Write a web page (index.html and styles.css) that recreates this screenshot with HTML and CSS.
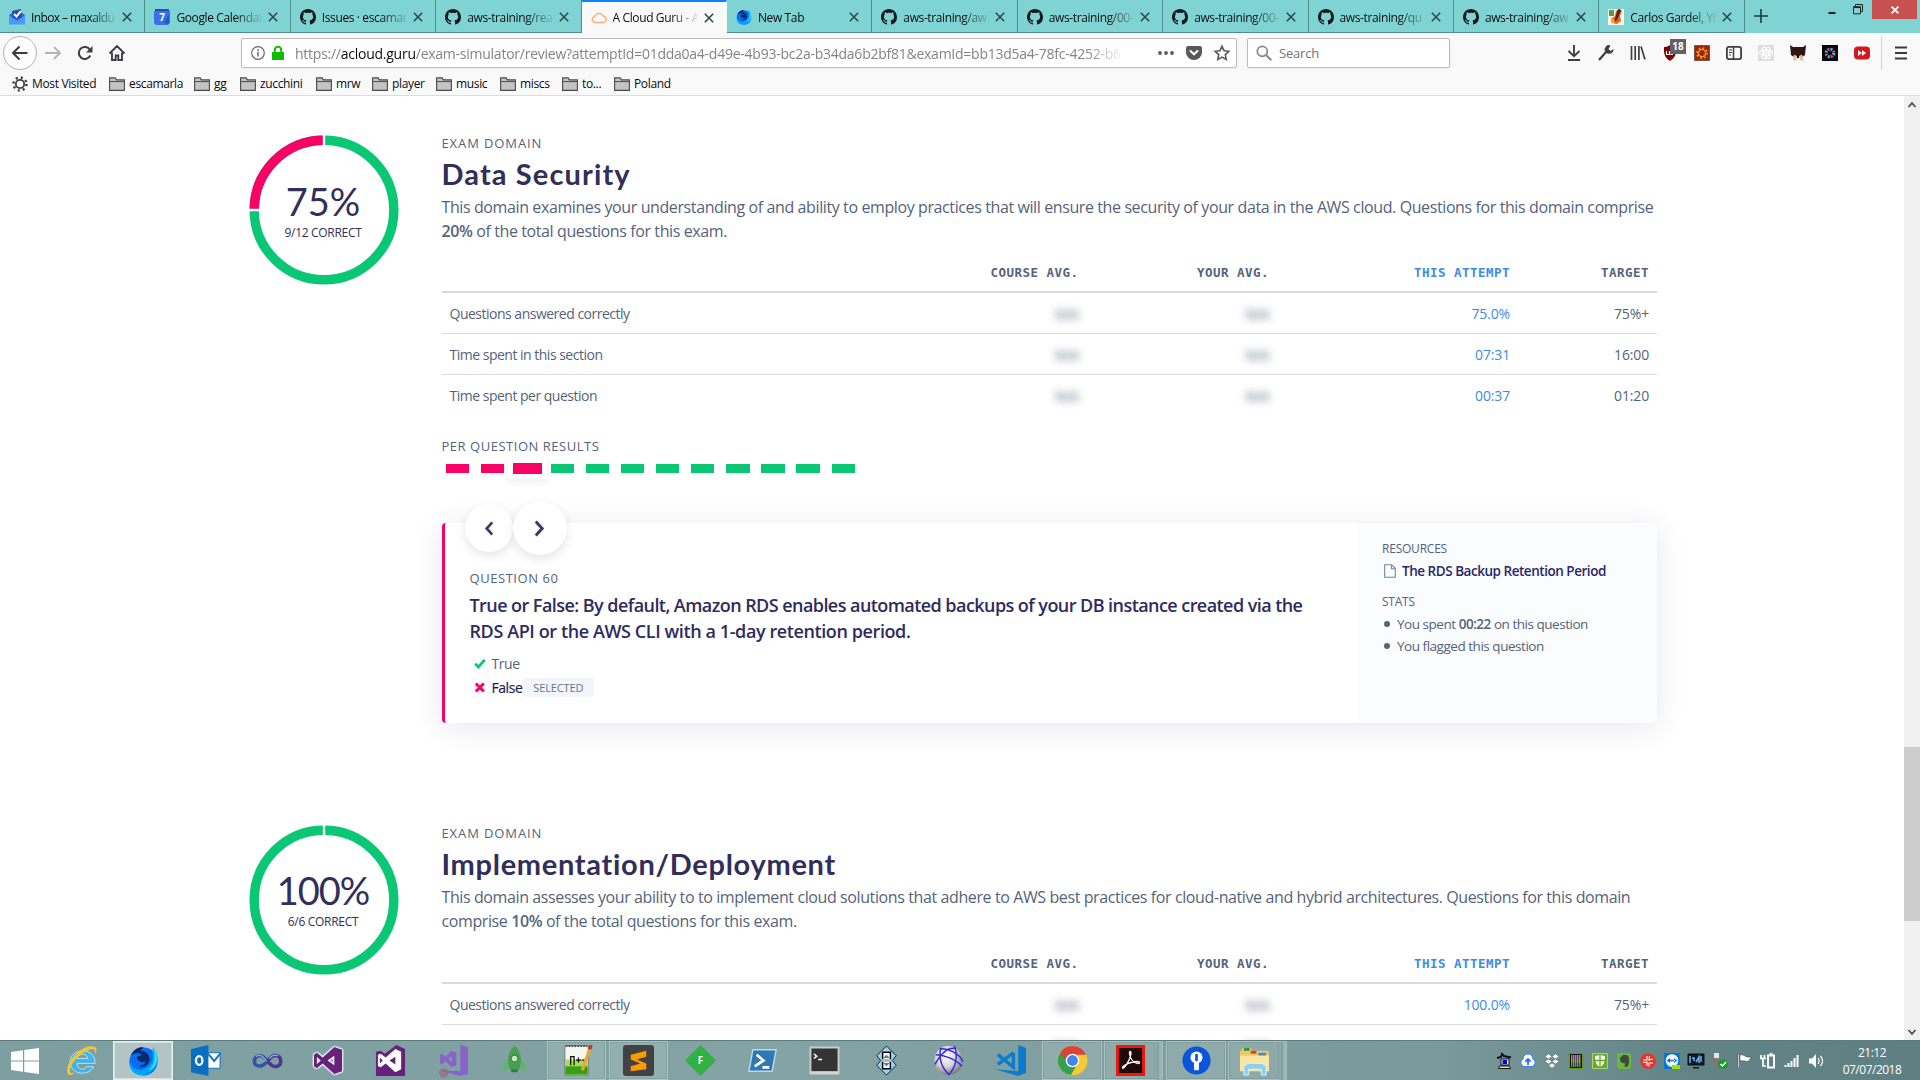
FILE: index.html
```html
<!DOCTYPE html>
<html lang="en">
<head>
<meta charset="utf-8">
<title>A Cloud Guru - Exam review</title>
<link rel="stylesheet" href="styles.css">
</head>
<body>
<svg class="defs" aria-hidden="true">
  <symbol id="github" viewBox="0 0 16 16"><path d="M8 0C3.58 0 0 3.58 0 8c0 3.54 2.29 6.53 5.47 7.59.4.07.55-.17.55-.38 0-.19-.01-.82-.01-1.49-2.01.37-2.53-.49-2.69-.94-.09-.23-.48-.94-.82-1.13-.28-.15-.68-.52-.01-.53.63-.01 1.08.58 1.23.82.72 1.21 1.87.87 2.33.66.07-.52.28-.87.51-1.07-1.78-.2-3.64-.89-3.64-3.95 0-.87.31-1.59.82-2.15-.08-.2-.36-1.02.08-2.12 0 0 .67-.21 2.2.82.64-.18 1.32-.27 2-.27s1.36.09 2 .27c1.53-1.04 2.2-.82 2.2-.82.44 1.1.16 1.92.08 2.12.51.56.82 1.27.82 2.15 0 3.07-1.87 3.75-3.65 3.95.29.25.54.73.54 1.48 0 1.07-.01 1.93-.01 2.2 0 .21.15.46.55.38A8.01 8.01 0 0 0 16 8c0-4.42-3.58-8-8-8z" fill="#14191c"/></symbol>
  <symbol id="close" viewBox="0 0 10 10"><path d="M.8.8l8.4 8.4M9.2.8L.8 9.2" stroke="#27474a" stroke-width="1.5" fill="none"/></symbol>
  <symbol id="folder" viewBox="0 0 16 14"><path d="M.6 13.4V.9h5.6l1.2 2h8v10.500z" fill="#c4c4c4" stroke="#4a4a4a" stroke-width="1.1"/><path d="M1 4.600h14.500" stroke="#4a4a4a"/></symbol>
  <symbol id="firefox" viewBox="0 0 32 32"><circle cx="16" cy="17" r="14.500" fill="#0a6cf5"/><path d="M3 11C5 5 10 2 16 2l-3 4c6 0 10 5 9 10s-6 8-11 6c5-1 7-3 7-5-3 2-8 0-9-4 1-2 3-2 5-2-1-3-6-4-11 0z" fill="#082a6b"/><path d="M26 2c5 6 6 13 3 19-3 7-10 11-17 10C5 30 1 24 1.500 17c2 6 8 10 14 8 8-2 12-10 9.500-18z" fill="#00a5ff"/><path d="M26 2c5 6 5 12 3 17-1 4-4 6-8 7 6-5 8-12 5-24z" fill="#2fe0fd"/></symbol>
  <symbol id="vs" viewBox="0 0 32 32"><path d="M22 2l8 3v22l-8 3L10 19l-6 5-3-2V10l3-2 6 5zM22 11l-7 5 7 5zM4 12.500v7L8 16z" fill-rule="evenodd"/></symbol>
</svg>

<div class="browser">
  <header class="tabs">
    <div class="tab"><svg class="fav" viewBox="0 0 16 16"><path d="M0 6l8-5 8 5v9H0z" fill="#2a66d9"/><path d="M3 2l9-2 1 9H4z" fill="#2449b8"/><path d="M0 6l8 6 8-6v9.500H0z" fill="#4a9bf7"/><path d="M5 5l2.500 2.500L12 2" stroke="#fff" stroke-width="2" fill="none"/></svg><span class="tab-title">Inbox – maxaldu</span><svg class="x"><use href="#close"/></svg></div>
    <div class="tab"><svg class="fav" viewBox="0 0 16 16"><path d="M1 0h14v3H1z" fill="#1f4fc0"/><path d="M0 2h16v12l-2 2H2l-2-2z" fill="#3772ea"/><path d="M10 14l5-9v9l-1 1z" fill="#2457c5"/><text x="8" y="12" text-anchor="middle" class="cal-day">7</text></svg><span class="tab-title">Google Calendar</span><svg class="x"><use href="#close"/></svg></div>
    <div class="tab"><svg class="fav"><use href="#github"/></svg><span class="tab-title">Issues · escamarl</span><svg class="x"><use href="#close"/></svg></div>
    <div class="tab"><svg class="fav"><use href="#github"/></svg><span class="tab-title">aws-training/rea</span><svg class="x"><use href="#close"/></svg></div>
    <div class="tab active"><svg class="fav" viewBox="0 0 16 16"><path d="M4 12.500a3.200 3.200 0 0 1-.3-6.200 4.600 4.600 0 0 1 8.500-.3A3.300 3.300 0 0 1 12.500 12.500z" fill="none" stroke="#ffae6b" stroke-width="1.300"/></svg><span class="tab-title">A Cloud Guru - A</span><svg class="x"><use href="#close"/></svg></div>
    <div class="tab"><svg class="fav"><use href="#firefox"/></svg><span class="tab-title">New Tab</span><svg class="x"><use href="#close"/></svg></div>
    <div class="tab"><svg class="fav"><use href="#github"/></svg><span class="tab-title">aws-training/aw</span><svg class="x"><use href="#close"/></svg></div>
    <div class="tab"><svg class="fav"><use href="#github"/></svg><span class="tab-title">aws-training/00-</span><svg class="x"><use href="#close"/></svg></div>
    <div class="tab"><svg class="fav"><use href="#github"/></svg><span class="tab-title">aws-training/00-</span><svg class="x"><use href="#close"/></svg></div>
    <div class="tab"><svg class="fav"><use href="#github"/></svg><span class="tab-title">aws-training/qu</span><svg class="x"><use href="#close"/></svg></div>
    <div class="tab"><svg class="fav"><use href="#github"/></svg><span class="tab-title">aws-training/aw</span><svg class="x"><use href="#close"/></svg></div>
    <div class="tab"><svg class="fav" viewBox="0 0 16 16"><path d="M0 0h16v16H0z" fill="#fdf6ea"/><path d="M1 1h5v6H1z" fill="#5d9a3a"/><path d="M8 2l4-2 2 2-2 5 1 5-4 3-5-1-1-4 4-3z" fill="#e0661a"/><path d="M10 0l3 1-4 10-3 2z" fill="#5a1d10"/><path d="M3 10l3 0 1 4-4 0z" fill="#f2a73b"/></svg><span class="tab-title">Carlos Gardel, Yi</span><svg class="x"><use href="#close"/></svg></div>
    <svg class="new-tab" viewBox="0 0 14 14"><path d="M7 0v14M0 7h14" stroke="#20393b" stroke-width="1.600"/></svg>
    <div class="window-controls">
      <svg viewBox="0 0 10 10"><path d="M1.500 7h7" stroke="#222" stroke-width="2"/></svg>
      <svg viewBox="0 0 10 10"><path d="M.5 2.800h7v7h-7zM2.500 2.500V.5h7v7h-2" fill="none" stroke="#222"/><path d="M.5 3.300h7" stroke="#222" stroke-width="1.500"/></svg>
      <span class="win-close"><svg viewBox="0 0 8 8"><path d="M.6.6l6.800 6.800M7.400.6L.6 7.400" stroke="#fff" stroke-width="1.700"/></svg></span>
    </div>
  </header>

  <div class="navbar">
    <span class="back"><svg viewBox="0 0 16 16"><path d="M15.500 8H1M7.500 1.500L1 8l6.500 6.500" fill="none" stroke="#3b3b3c" stroke-width="2"/></svg></span>
    <svg class="ic" viewBox="0 0 16 16"><path d="M0 8h14.500M9 2l6 6-6 6" fill="none" stroke="#b3b3b5" stroke-width="1.800"/></svg>
    <svg class="ic" viewBox="0 0 16 16"><path d="M13.300 10.500a6 6 0 1 1-.3-5.500" fill="none" stroke="#3f3f41" stroke-width="2"/><path d="M15.500 1v6.500H9z" fill="#3f3f41"/></svg>
    <svg class="ic" viewBox="0 0 16 16"><path d="M.5 8.500L8 1l7.500 7.500M3 7.500V15h3.700v-4.500h2.600V15H13V7.500" fill="none" stroke="#3f3f41" stroke-width="1.900"/></svg>
    <div class="urlbar">
      <svg class="info" viewBox="0 0 14 14"><circle cx="7" cy="7" r="6.300" fill="none" stroke="#6a6a6c" stroke-width="1.200"/><path d="M7 6v4.500M7 3.300v1.600" stroke="#6a6a6c" stroke-width="1.500"/></svg>
      <svg class="lock" viewBox="0 0 12 14"><path d="M0 6h12v8H0z" fill="#12bc00"/><path d="M2.800 7V4a3.200 3.200 0 0 1 6.400 0v3" fill="none" stroke="#12bc00" stroke-width="2"/></svg>
      <span class="url">https://<b>acloud.guru</b>/exam-simulator/review?attemptId=01dda0a4-d49e-4b93-bc2a-b34da6b2bf81&amp;examId=bb13d5a4-78fc-4252-b6</span>
      <svg class="ic" viewBox="0 0 16 16"><g fill="#59595b"><circle cx="2" cy="8" r="1.900"/><circle cx="8" cy="8" r="1.900"/><circle cx="14" cy="8" r="1.900"/></g></svg>
      <svg class="ic" viewBox="0 0 16 16"><path d="M2 1h12a2 2 0 0 1 2 2v4.500a8 7.500 0 0 1-16 0V3a2 2 0 0 1 2-2z" fill="#59595b"/><path d="M4.500 6L8 9.300 11.500 6" fill="none" stroke="#fff" stroke-width="2" stroke-linecap="round"/></svg>
      <svg class="ic" viewBox="0 0 16 16"><path d="M8 1.300l2 4.400 4.900.6-3.600 3.300.9 4.900L8 12.100l-4.200 2.400.9-4.900L1.100 6.300 6 5.700z" fill="none" stroke="#59595b" stroke-width="1.600"/></svg>
    </div>
    <div class="searchbar"><svg class="ic" viewBox="0 0 16 16"><circle cx="6.300" cy="6.300" r="5" fill="none" stroke="#8a8a8c" stroke-width="1.800"/><path d="M10 10l5.300 5.300" stroke="#8a8a8c" stroke-width="2"/></svg><span>Search</span></div>
    <div class="tools">
      <svg viewBox="0 0 16 16"><path d="M8 0v10.500M2.500 6L8 11.200 13.500 6M2 15h12" fill="none" stroke="#3f3f41" stroke-width="1.900"/></svg>
      <svg viewBox="0 0 16 16"><path d="M1 15l7.500-8.500" stroke="#3f3f41" stroke-width="2.200"/><path d="M12.500.5A4.200 4.200 0 0 0 7 6c.5 1.500 2 2.800 4 2.800A4.200 4.200 0 0 0 15.500 4l-3 2-2-2z" fill="#3f3f41"/></svg>
      <svg viewBox="0 0 16 16"><path d="M1.500 1v14M5.200 1v14M8.900 1v14M11 1.500l4 13" stroke="#3f3f41" stroke-width="1.700"/></svg>
      <span class="ublock"><svg viewBox="0 0 16 16"><path d="M8 0c2 1.500 4 2 6 2 .5 7-1 11-6 14C3 13 1.500 9 2 2c2 0 4-.5 6-2z" fill="#800000"/><path d="M4.500 6v3.500h3V6M9 6.500v3h2" fill="none" stroke="#fff" stroke-width="1.200"/></svg><em>18</em></span>
      <svg viewBox="0 0 16 16"><path d="M.5.5h15v15H.5z" fill="#a02506" stroke="#75554a"/><circle cx="8" cy="8" r="5" fill="none" stroke="#f0a030" stroke-width="1.800" stroke-dasharray="1.600 2.320"/><circle cx="8" cy="8" r="3.600" fill="none" stroke="#f0a030" stroke-width="1.300"/></svg>
      <svg viewBox="0 0 16 16"><rect x=".9" y="1.900" width="14.200" height="12.200" rx="2" fill="none" stroke="#3f3f41" stroke-width="1.800"/><path d="M7.500 2v12" stroke="#3f3f41" stroke-width="1.500"/><path d="M3 5h3M3 7.500h3M3 10h2" stroke="#3f3f41"/></svg>
      <svg viewBox="0 0 16 16"><path d="M0 0h16v16H0z" fill="#dedede"/><g fill="none" stroke="#fff" stroke-width="1.100"><ellipse cx="8" cy="8" rx="6.500" ry="2.600"/><ellipse cx="8" cy="8" rx="6.500" ry="2.600" transform="rotate(60 8 8)"/><ellipse cx="8" cy="8" rx="6.500" ry="2.600" transform="rotate(120 8 8)"/></g><circle cx="8" cy="8" r="1.500" fill="#fff"/></svg>
      <svg viewBox="0 0 16 16"><path d="M0 0l3 2h10l3-2-1 10-3 2H4l-3-2z" fill="#2e1613"/><path d="M3 15.500l1-6 3 1.500h2l3-1.500 1.500 6h-3l-1-3H7l-1 3z" fill="#eebd98"/><path d="M7 11h2v2H7z" fill="#111"/></svg>
      <svg viewBox="0 0 16 16"><path d="M0 0h16v16H0z" fill="#08080c"/><g fill="none" stroke-width="3"><circle cx="8" cy="8" r="3.800" stroke="#24c8e0" stroke-dasharray="2 3.970"/><circle cx="8" cy="8" r="3.800" stroke="#e8408c" stroke-dasharray="2 3.970" stroke-dashoffset="-3"/></g></svg>
      <svg viewBox="0 0 16 16"><rect y="1.500" width="16" height="13" rx="4" fill="#d8141c"/><path d="M4 5l4 3-4 3zM8 5l4 3-4 3z" fill="#fff"/></svg>
    </div>
    <svg class="menu" viewBox="0 0 12 14"><path d="M0 1.500h12M0 7h12M0 12.500h12" stroke="#3a3a3c" stroke-width="2"/></svg>
  </div>

  <nav class="bookmarks">
    <span><svg class="gear" viewBox="0 0 16 16"><circle cx="8" cy="8" r="4.200" fill="none" stroke="#3f3f41" stroke-width="1.800"/><circle cx="8" cy="8" r="6.500" fill="none" stroke="#3f3f41" stroke-width="2.400" stroke-dasharray="2.100 3"/></svg>Most Visited</span>
    <span><svg><use href="#folder"/></svg>escamarla</span>
    <span><svg><use href="#folder"/></svg>gg</span>
    <span><svg><use href="#folder"/></svg>zucchini</span>
    <span><svg><use href="#folder"/></svg>mrw</span>
    <span><svg><use href="#folder"/></svg>player</span>
    <span><svg><use href="#folder"/></svg>music</span>
    <span><svg><use href="#folder"/></svg>miscs</span>
    <span><svg><use href="#folder"/></svg>to...</span>
    <span><svg><use href="#folder"/></svg>Poland</span>
  </nav>
</div>

<div class="viewport">
  <main class="page">
    <section class="domain">
      <div class="score">
        <svg viewBox="0 0 150 150"><circle cx="75" cy="75" r="69.800" fill="none" stroke="#0ac775" stroke-width="9.400"/><path d="M5.200 75A69.800 69.800 0 0 1 75 5.200" fill="none" stroke="#f80266" stroke-width="9.400"/><path d="M75 0v10.500M0 75h10.500" stroke="#fff" stroke-width="2.400"/></svg>
        <div class="score-text"><strong>75%</strong><span>9/12 CORRECT</span></div>
      </div>
      <div class="detail">
        <div class="eyebrow">EXAM DOMAIN</div>
        <h2 class="short">Data Security</h2>
        <p class="desc">This domain examines your understanding of and ability to employ practices that will ensure the security of your data in the AWS cloud. Questions for this domain comprise<br><b>20%</b> of the total questions for this exam.</p>
        <div class="table">
          <div class="row head"><span></span><span>COURSE AVG.</span><span>YOUR AVG.</span><span class="mine">THIS ATTEMPT</span><span>TARGET</span></div>
          <div class="row"><span>Questions answered correctly</span><span class="hid">N/A</span><span class="hid">N/A</span><span class="mine">75.0%</span><span>75%+</span></div>
          <div class="row"><span>Time spent in this section</span><span class="hid">N/A</span><span class="hid">N/A</span><span class="mine">07:31</span><span>16:00</span></div>
          <div class="row"><span>Time spent per question</span><span class="hid">N/A</span><span class="hid">N/A</span><span class="mine">00:37</span><span>01:20</span></div>
        </div>
        <div class="eyebrow results-label">PER QUESTION RESULTS</div>
        <div class="results"><i class="bad"></i><i class="bad"></i><i class="bad current"></i><i></i><i></i><i></i><i></i><i></i><i></i><i></i><i></i><i></i></div>
        <article class="card">
          <div class="pager">
            <span class="round"><svg viewBox="0 0 10 16"><path d="M8.500 1.500L2.500 8l6 6.500" fill="none" stroke="#3b3a66" stroke-width="2.800"/></svg></span>
            <span class="round big"><svg viewBox="0 0 10 16"><path d="M1.500 1.500L7.500 8l-6 6.500" fill="none" stroke="#3b3a66" stroke-width="2.800"/></svg></span>
          </div>
          <div class="question">
            <div class="eyebrow light">QUESTION 60</div>
            <h3>True or False: By default, Amazon RDS enables automated backups of your DB instance created via the<br><span class="loose">RDS API or the AWS CLI with a 1-day retention period.</span></h3>
            <div class="answer"><svg viewBox="0 0 12 10"><path d="M1.200 5.200l3.200 3.200 6.300-7" fill="none" stroke="#0ac775" stroke-width="2.800"/></svg>True</div>
            <div class="answer chosen"><svg viewBox="0 0 12 10"><path d="M1.800 1l8 8M9.800 1l-8 8" fill="none" stroke="#f80266" stroke-width="3"/></svg>False<em>SELECTED</em></div>
          </div>
          <aside>
            <div class="side-label">RESOURCES</div>
            <div class="resource"><svg viewBox="0 0 12 14"><path d="M.7.700h7l3.600 3.600v9H.7zM7.500.700v4h4" fill="none" stroke="#6f86a3" stroke-width="1.100"/></svg>The RDS Backup Retention Period</div>
            <div class="side-label stats">STATS</div>
            <ul><li>You spent <b>00:22</b> on this question</li><li>You flagged this question</li></ul>
          </aside>
        </article>
      </div>
    </section>

    <section class="domain second">
      <div class="score">
        <svg viewBox="0 0 150 150"><circle cx="75" cy="75" r="69.800" fill="none" stroke="#0ac775" stroke-width="9.400"/><path d="M75 0v10.500" stroke="#fff" stroke-width="2.400"/></svg>
        <div class="score-text"><strong class="full">100%</strong><span>6/6 CORRECT</span></div>
      </div>
      <div class="detail">
        <div class="eyebrow">EXAM DOMAIN</div>
        <h2>Implementation/Deployment</h2>
        <p class="desc">This domain assesses your ability to to implement cloud solutions that adhere to AWS best practices for cloud-native and hybrid architectures. Questions for this domain<br>comprise <b>10%</b> of the total questions for this exam.</p>
        <div class="table">
          <div class="row head"><span></span><span>COURSE AVG.</span><span>YOUR AVG.</span><span class="mine">THIS ATTEMPT</span><span>TARGET</span></div>
          <div class="row"><span>Questions answered correctly</span><span class="hid">N/A</span><span class="hid">N/A</span><span class="mine">100.0%</span><span>75%+</span></div>
          <div class="row"><span></span><span class="hid">N/A</span><span class="hid">N/A</span><span></span><span></span></div>
        </div>
      </div>
    </section>
  </main>
  <div class="scrollbar">
    <svg viewBox="0 0 8 6"><path d="M.5 5L4 1.200 7.500 5" fill="none" stroke="#505050" stroke-width="1.800"/></svg>
    <div class="thumb"></div>
    <svg viewBox="0 0 8 6"><path d="M.5 1L4 4.800 7.500 1" fill="none" stroke="#505050" stroke-width="1.800"/></svg>
  </div>
</div>

<footer class="taskbar">
  <div class="start"><svg viewBox="0 0 28 26"><path d="M0 4l12-1.800V12.400H0zM13.200 2L28 0v12.400H13.200zM0 13.600h12v10.200L0 22zM13.200 13.600H28V26l-14.800-2z" fill="#fff"/></svg></div>
  <div class="app"><svg viewBox="0 0 32 32"><path d="M30 19H11.500c0 6 7 8 9.500 3.500h7.500C24 32 6 32 4 18 4 2 31 2 30 19zM11.500 14h11c-.5-6-10-6-11 0z" fill="#41b4ee" fill-rule="evenodd" stroke="#d7f2ff" stroke-width=".8"/><path d="M2 30C-3 20 17-3 30 2c3 2 1 6 0 8 1-5-1-7-6-5C14 8 2 22 4.500 28c1 2 3 1 5 0-3 3-6 4-7.500 2z" fill="#f7c52c"/></svg></div>
  <div class="app focused"><svg><use href="#firefox"/></svg></div>
  <div class="app"><svg viewBox="0 0 32 32"><path d="M17 8h14v16H17z" fill="#fff" stroke="#0a6fc2"/><path d="M18.500 9L25 16.500 31.500 8.500" stroke="#0f77cc" stroke-width="2" fill="none"/><path d="M1 4l18-4v32L1 28z" fill="#0a6fc2"/><ellipse cx="9.500" cy="16" rx="3.300" ry="4.500" fill="none" stroke="#fff" stroke-width="2.400"/></svg></div>
  <div class="app"><svg viewBox="0 0 32 32"><path d="M16 17C12 11 9 10.500 6 11.500c-5 2-4.500 9 0 10 4 1 6-1 10-4.500z" fill="none" stroke="#2e58a5" stroke-width="3.600"/><path d="M16 17c4-6 7-7 10-6 5 2 5 9.500 0 11-4 1-6-1-10-5z" fill="none" stroke="#4c3a8c" stroke-width="3.600"/><path d="M4 12c4-3 7-1 11 5M18 14c3-4 6-4 9-3" fill="none" stroke="#8bb3e8" stroke-width="1.200"/></svg></div>
  <div class="app vs-out"><svg fill="#68217a"><use href="#vs"/></svg></div>
  <div class="app"><svg viewBox="0 0 32 32"><path d="M1 7l5-1 4 3 12-9 9 4v28H1z" fill="#68217a"/><path d="M21 4l6 3v18l-6 3L11 19l-5 4-3-1V10l3-1 5 4zM21 12l-6 4 6 4zM5 13v6l3-3z" fill="#fff" fill-rule="evenodd"/></svg></div>
  <div class="app"><svg viewBox="0 0 32 32"><path d="M24 0l8 2v28l-8 2-22-6 22 1z" fill="#8a63c9"/><path d="M15 6l5 2v13l-5 2-6-6-4 3-2-1v-9l2-1 4 3zM15 11l-3 3.500 3 3.500z" fill="#8a63c9" fill-rule="evenodd"/><circle cx="7" cy="29" r="5" fill="#a8506f" opacity=".45"/></svg></div>
  <div class="app"><svg viewBox="0 0 32 32"><path d="M16 1c7 6 8 15 5 24H11C8 16 9 7 16 1z" fill="#47a04f"/><path d="M9 16c-5 3-5 8-4 11l5-3zM23 16c5 3 5 8 4 11l-5-3z" fill="#5db565"/><circle cx="16" cy="14" r="3.500" fill="#c7e6c8" stroke="#277a35"/><path d="M12 25h8l-1 3h-6z" fill="#2f8040"/></svg></div>
  <div class="app open"><svg viewBox="0 0 32 32"><path d="M4 1h24v30H4z" fill="#f4f6f0" stroke="#555" stroke-width=".7"/><path d="M4.500 15h23v15.500h-23z" fill="#a6dc5a"/><path d="M4.500 22h23v8.500h-23z" fill="#35a014"/><path d="M5 1h22" stroke="#444" stroke-width="2" stroke-dasharray="1.500 1.500"/><path d="M10 21v-9h3.500v9M15.500 15.500h5M18 13v5M21.500 15.500h5" stroke="#111" stroke-width="1.300" fill="none"/><path d="M30 3L22 26" stroke="#f3a22f" stroke-width="3.200"/><path d="M31 0l-1.500 4.500" stroke="#b83b3b" stroke-width="3.600"/></svg></div>
  <div class="app open"><svg viewBox="0 0 32 32"><rect width="32" height="32" rx="3" fill="#424244"/><path d="M24 6v6l-10 3 10 4v6L8 27v-5l10-3-10-4v-5z" fill="#ff9a00"/></svg></div>
  <div class="app"><svg viewBox="0 0 32 32"><path d="M16 0l16 16-16 16L0 16z" fill="#30b143"/><text x="16" y="20" text-anchor="middle" class="glyph-f">F</text></svg></div>
  <div class="app"><svg viewBox="0 0 32 32"><path d="M6 5h24l-4 22H2z" fill="#2f78b7" stroke="#b6daf2" stroke-width="1.500"/><path d="M10 10l7 6-9 6M16 23h7" stroke="#fff" stroke-width="2.800" fill="none"/></svg></div>
  <div class="app"><svg viewBox="0 0 32 32"><path d="M1.500 2.500h29v27h-29z" fill="#343434" stroke="#c9cccb" stroke-width="2"/><path d="M2 27h28v3H2z" fill="#d5d6d4"/><path d="M5 9l3 2.500L5 14M9.500 15h4" stroke="#fff" stroke-width="1.500" fill="none"/></svg></div>
  <div class="app"><svg viewBox="0 0 32 32"><path d="M16 1l10 10-4 5 4 5-10 10L6 21l4-5-4-5z" fill="#9dd2f7" stroke="#123"/><path d="M12 7.500h8v17h-8z" fill="#fff" stroke="#000" stroke-width="1.500"/><path d="M12.500 13.500L16 10l3.500 3.500zM12.500 18.500L16 22l3.500-3.500z" fill="#2f8fae"/><path d="M11 14.500h10v3H11z" fill="#b5b5b5"/></svg></div>
  <div class="app"><svg viewBox="0 0 32 32"><defs><radialGradient id="ball" cx=".4" cy=".35" r=".7"><stop offset="0" stop-color="#fff"/><stop offset=".5" stop-color="#d8d8dc"/><stop offset="1" stop-color="#6f6f74"/></radialGradient></defs><ellipse cx="16" cy="16" rx="14.500" ry="15" fill="url(#ball)"/><g fill="none" stroke="#3528d8" stroke-width="1.500"><path d="M3 10c7 0 20 4 27 12M2 20C10 6 18 2 24 4M8 3c-2 10 0 20 9 28M22 1c4 9 2 22-6 30M7 4c9-1 20 5 24 13"/></g></svg></div>
  <div class="app"><svg viewBox="0 0 32 32"><path d="M24 0l8 3v26l-8 3L0 25l24 2z" fill="#0b7bd0"/><path d="M19 8v15L3 10M3 20L19 8" fill="none" stroke="#0b7bd0" stroke-width="3.500"/></svg></div>
  <div class="app open"><svg viewBox="0 0 32 32"><circle cx="16" cy="16" r="15" fill="#e9ba27"/><path d="M2.700 9A15 15 0 0 0 14.500 31L21 20l-5-4z" fill="#34a050"/><path d="M30 10a15 15 0 0 1-15.500 21L22 18V10z" fill="#f4cb37"/><path d="M3 8.500A15 15 0 0 1 29.800 10H16l-6 6z" fill="#d9453a"/><circle cx="16" cy="16" r="7" fill="#fff"/><circle cx="16" cy="16" r="5.600" fill="#4285f0"/></svg></div>
  <div class="app open stacked"><svg viewBox="0 0 32 32"><path d="M2.500 1.500h27v29h-27z" fill="#1f0909" stroke="#f01708" stroke-width="3"/><path d="M8 24c3-1 8-10 8.500-15 .2-3-2-3-1.500 0 .6 5 4 9 8 10 3 .5 3-2 0-2-5 0-9 1.500-13 4-2 1.500-2.500 2.500-2 3z" fill="none" stroke="#fff" stroke-width="1.400"/></svg></div>
  <div class="app open"><svg viewBox="0 0 32 32"><circle cx="16" cy="16" r="14.500" fill="#0a55dd"/><circle cx="16" cy="13" r="6.200" fill="#fff"/><path d="M13.500 16h5v10h-5z" fill="#fff"/><path d="M16 10.500v5" stroke="#0a55dd" stroke-width="2.800" stroke-linecap="round"/></svg></div>
  <div class="app open stacked"><svg viewBox="0 0 32 32"><path d="M1 7l3-4h8l2 3h16l1 3v18H1z" fill="#eec964"/><path d="M5 3h6v3H5z" fill="#2b9d3f"/><path d="M12 6h6v3h-6z" fill="#d24132"/><path d="M20 8h8v3h-8z" fill="#368ede"/><path d="M1 11h30v16H1z" fill="#fae6a0"/><path d="M5 31V22l4-3h15l4 3v9h-5v-6H10v6z" fill="#8fd0ee" stroke="#d8f3ff"/></svg></div>
  <div class="tray">
    <svg viewBox="0 0 16 16"><path d="M5 6h8v6H5z" fill="#eee" stroke="#111"/><path d="M3.500 13h10l1 2.500h-12z" fill="#ddd" stroke="#111"/><path d="M6.500 7h4.500v4H6.500z" fill="#00f"/><path d="M1 5l4-1 1-3 2 2 7 1.500" stroke="#111" stroke-width="2" fill="none"/></svg>
    <svg viewBox="0 0 16 16"><path d="M4 13.500a4 4 0 0 1-1-7.500 5 5 0 0 1 10 0 4 4 0 0 1-1 7.500z" fill="#fff" stroke="#3c7bea"/><path d="M8 12V6M5.500 8.500L8 6l2.500 2.500" stroke="#2c6fe0" stroke-width="1.800" fill="none"/></svg>
    <svg viewBox="0 0 16 16"><path d="M4.500 1L8 3.500 4.500 6 1 3.500zM11.500 1L15 3.500 11.500 6 8 3.500zM4.500 6L8 8.500 4.500 11 1 8.500zM11.500 6L15 8.500 11.500 11 8 8.500zM8 10l3.500 2.500L8 15l-3.500-2.500z" fill="#fff" stroke="#456" stroke-width=".4"/></svg>
    <svg viewBox="0 0 16 16"><path d="M.5 0h15v16H.5z" fill="#6b9a18"/><path d="M2 1h12v14H2z" fill="#161616"/><path d="M3 3h10M3 5h10" stroke="#e0a0c0" stroke-width="1.300" stroke-dasharray="1.500 .5"/><path d="M3 7h10M3 9h10" stroke="#e0c070" stroke-width="1.300" stroke-dasharray="1.500 .5"/><path d="M3 11h10M3 13h10" stroke="#5fbea3" stroke-width="1.300" stroke-dasharray="1.500 .5"/></svg>
    <svg viewBox="0 0 16 16"><path d="M.5.500h15v15H.5z" fill="#6aa92b" stroke="#a8d66c"/><path d="M3 3l5-1 5 1c0 6-1 9-5 11-4-2-5-5-5-11z" fill="#f0f7e6"/><path d="M8 2v12M3 7.500h10" stroke="#6aa92b" stroke-width="1.300"/></svg>
    <svg viewBox="0 0 16 16"><rect x="1" width="14" height="16" rx="2" fill="#68b53f"/><path d="M4 5l3-3h3c3 0 3 3 3 6s-1 6-3 6-2-3 0-3l-3-1c-2 0-3-2-3-5z" fill="#3c4a3a"/></svg>
    <svg viewBox="0 0 16 16"><circle cx="8" cy="8" r="7.800" fill="#e6332a"/><path d="M7 3v4H3M9.500 3L9 7l4-1M3 9.500l4-.5v4M13 10H9v3.500" stroke="#fff" stroke-width="1.100" fill="none"/></svg>
    <svg viewBox="0 0 16 16"><path d="M0 0h16v16H0z" fill="#0b75de"/><circle cx="8" cy="7.500" r="6.300" fill="#fff"/><path d="M2.500 7.500L6 5v5zM13.500 7.500L10 5v5zM5 6.800h6v1.400H5z" fill="#0b75de"/><path d="M8 12h8v4H8z" fill="#9be300"/></svg>
    <svg viewBox="0 0 16 16"><path d="M0 1h16v11H0z" fill="#101a28" stroke="#0b0f18"/><path d="M2 3v7M4 5h2v3M8 9l3-5v6M13 3v6" stroke="#69b8ee" stroke-width="1.500" fill="none"/><path d="M5 14h6v1.500H5z" fill="#111"/></svg>
    <svg viewBox="0 0 16 16"><path d="M2 0h5v5H2z" fill="#e6e6e6"/><path d="M0 5h8v7l-3 4H3l-3-4z" fill="#777b7b"/><circle cx="11" cy="11" r="5" fill="#1e9b2b"/><path d="M8.500 11l2 2 3.500-4" stroke="#fff" stroke-width="1.500" fill="none"/></svg>
    <svg viewBox="0 0 16 16"><path d="M2 1h1.500v14H2z" fill="#fff" stroke="#334" stroke-width=".5"/><path d="M4 2c3-1 4 1 7 2h4l-2 4c-4 1-5-1-9 0z" fill="#fff" stroke="#334" stroke-width=".5"/></svg>
    <svg viewBox="0 0 16 16"><path d="M8 2.500h6v12H8z" fill="none" stroke="#fff" stroke-width="2"/><path d="M9.500 0h3v2h-3z" fill="#fff"/><path d="M1 2v3M4.500 2v3M0 5.500h6M3 6v7h3" stroke="#fff" stroke-width="1.700" fill="none"/></svg>
    <svg viewBox="0 0 16 16"><path d="M1.500 14v-2M4.500 14v-4M7.500 14V8M10.500 14V5M13.500 14V2" stroke="#fff" stroke-width="2"/></svg>
    <svg viewBox="0 0 16 16"><path d="M1 5.500h3L8 1v14l-4-4.500H1z" fill="#fff"/><path d="M10 5c1.500 2 1.500 4 0 6M12.500 3c2.500 3 2.500 7 0 10" stroke="#fff" stroke-width="1.200" fill="none"/></svg>
  </div>
  <div class="clock"><span>21:12</span><span>07/07/2018</span></div>
</footer>
</body>
</html>
```
FILE: styles.css
```css
* { box-sizing: border-box; margin: 0; padding: 0; }
html, body { width: 1920px; height: 1080px; overflow: hidden; }
body { display: flex; flex-direction: column; background: #fff; font: 12px "Open Sans", "Noto Sans", sans-serif; color: #55637a; }
svg { display: block; flex: none; overflow: visible; }
.defs { position: absolute; width: 0; height: 0; overflow: hidden; }

/* browser chrome */
.browser { height: 96px; flex: none; background: #f9f9fa; border-bottom: 1px solid #dcdcdd; color: #0c0c0d; }
.tabs { display: flex; height: 33px; background: #7fd3d2; }
.tab { display: flex; align-items: center; flex: none; width: 145.4px; height: 33px; padding: 2px 12px 0 9px; border-right: 1px solid #4f8e8f; border-bottom: 1px solid #4f8e8f; }
.tab.active { background: #f9f9fa; border-top: 2px solid #0a84ff; border-bottom: 0; padding-top: 0; border-right-color: #f9f9fa; }
.fav { width: 16px; height: 16px; }
.tab-title { width: 87px; margin: 0 7px 0 6px; overflow: hidden; white-space: nowrap; letter-spacing: -.38px; -webkit-mask-image: linear-gradient(90deg, #000 58px, transparent 88px); mask-image: linear-gradient(90deg, #000 58px, transparent 88px); }
.tab:first-child .tab-title { letter-spacing: -.6px; }
.x { width: 10px; height: 10px; }
.cal-day { font: bold 10px "Open Sans", sans-serif; fill: #fff; }
.glyph-f { font: bold 10px "Open Sans", sans-serif; fill: #fff; }
.new-tab { width: 14px; height: 14px; margin: 9px 0 0 9px; }
.window-controls { display: flex; margin-left: auto; padding-right: 3px; }
.window-controls > svg { width: 10px; height: 10px; margin: 6px 16px 0 0; }
.window-controls > svg + svg { margin: 4px 9px 0 0; }
.win-close { display: flex; align-items: center; justify-content: center; width: 45px; height: 19px; background: #c75050; }
.win-close svg { width: 8px; height: 8px; }

.navbar { display: flex; align-items: center; height: 40px; padding: 0 13px 0 3px; }
.back { display: flex; align-items: center; justify-content: center; width: 34px; height: 34px; border: 1px solid #b5b5b6; border-radius: 50%; background: #fdfdfd; }
.back svg, .ic { width: 16px; height: 16px; }
.back + .ic { margin-left: 8px; }
.ic + .ic { margin-left: 16px; }
.urlbar, .searchbar { display: flex; align-items: center; height: 30px; border: 1px solid #bcbcbd; border-radius: 2px; background: #fff; box-shadow: 0 1px 3px rgba(0,0,0,.05); }
.urlbar { width: 996px; margin-left: 116px; padding-left: 9px; }
.info { width: 14px; height: 14px; }
.lock { width: 12px; height: 14px; margin-left: 7px; }
.url { width: 830px; margin: 0 33px 0 11px; overflow: hidden; white-space: nowrap; font-size: 14px; letter-spacing: -.25px; color: #838385; -webkit-mask-image: linear-gradient(90deg, #000 790px, transparent 830px); mask-image: linear-gradient(90deg, #000 790px, transparent 830px); }
.url b { font-weight: 400; color: #0c0c0d; }
.urlbar .ic + .ic { margin-left: 12px; }
.searchbar { width: 203px; margin-left: 10px; padding-left: 8px; font-size: 13px; color: #737375; }
.searchbar span { margin-left: 7px; letter-spacing: -.2px; }
.tools { display: flex; gap: 16px; margin-left: 116px; }
.tools svg { width: 16px; height: 16px; }
.ublock { position: relative; width: 16px; }
.ublock em { position: absolute; left: 8px; top: -6px; width: 16px; height: 15px; background: #626264; color: #fff; font: bold 10px/15px "Open Sans", sans-serif; text-align: center; }
.menu { width: 12px; height: 14px; margin-left: auto; }
.navbar .menu { box-sizing: content-box; padding: 10px 0 10px 13px; border-left: 1px solid #d2d2d3; }

.bookmarks { display: grid; grid-template-columns: 97px 85px 46px 76px 56px 64px 64px 62px 52px 80px; padding: 0 0 0 12px; height: 21px; align-items: center; letter-spacing: -.35px; }
.bookmarks span { display: flex; align-items: center; gap: 4px; white-space: nowrap; }
.bookmarks svg { width: 16px; height: 14px; }
.bookmarks .gear { height: 16px; }

/* page */
.viewport { display: flex; height: 944px; flex: none; overflow: hidden; }
.page { flex: 1; padding-top: 38px; overflow: hidden; }
.domain { display: flex; gap: 42.500px; padding-left: 249px; }
.second { margin-top: 101px; }
.score { display: flex; width: 150px; height: 150px; margin-top: .500px; }
.second .score { margin-top: 1px; }
.score > svg { width: 150px; height: 150px; }
.score-text { display: flex; flex-direction: column; align-items: center; width: 150px; margin-left: -151px; padding-top: 43px; color: #322e5a; }
.score-text strong { font: 400 38px/46px Lato, sans-serif; }
.score-text .full { letter-spacing: -1px; }
.score-text span { line-height: 18px; letter-spacing: -.3px; }
.second .score-text { padding-top: 42px; }
.detail { width: 1215.500px; }
.eyebrow { height: 19px; font-size: 13px; line-height: 19px; font-weight: 500; letter-spacing: .9px; white-space: nowrap; }
h2 { height: 35px; margin-top: 3px; font: 700 29px/35px Lato, sans-serif; letter-spacing: .700px; color: #322e5a; }
h2.short { letter-spacing: 1.120px; }
.desc { height: 48px; margin-top: 4px; font-size: 16px; line-height: 24px; letter-spacing: -.395px; white-space: nowrap; }
.table { margin-top: 10px; }
.second .table { margin-top: 11px; }
.row { display: grid; grid-template-columns: 460px 185px 190.500px 241px 139px; height: 41px; line-height: 41px; padding: 0; border-bottom: 1px solid #dbdbdb; font-size: 14px; letter-spacing: -.5px; }
.row > span { padding: 0 8px; text-align: right; white-space: nowrap; }
.row > span:first-child { text-align: left; }
.row:last-child { border-bottom-color: transparent; }
.row.head { height: 40px; border-bottom: 2px solid #dbdbdb; font: bold 12.500px/40px "DejaVu Sans Mono", monospace; letter-spacing: .48px; }
.row .mine { color: #3d8be6; }
.row:not(.head) > span:nth-child(n+4) { letter-spacing: -.15px; }
.row .hid { font: bold 13px/42px "Open Sans", sans-serif; letter-spacing: -.5px; filter: blur(4px); opacity: .75; }
.results-label { height: 20px; margin-top: 20px; line-height: 20px; letter-spacing: .52px; }
.results { display: flex; align-items: center; gap: 11.800px; height: 21px; margin-top: 2px; padding-left: 4px; }
.results i { width: 23.300px; height: 9px; background: #0ac775; }
.results .bad { background: #f80266; }
.results .current { width: 29.300px; height: 11px; margin: 0 -3px; box-shadow: 0 0 0 5px #fff, 0 2px 6px 6px rgba(40,40,80,.07); }

.card { display: grid; grid-template-columns: 1fr 300px; height: 200px; margin-top: 44px; border-left: 3px solid #f80266; border-radius: 4px; background: #fff; box-shadow: 0 4px 30px rgba(50,50,93,.11); position: relative; }
.pager { position: absolute; left: 20px; top: -22px; display: flex; align-items: center; height: 54px; }
.round { display: flex; align-items: center; justify-content: center; width: 48px; height: 48px; border-radius: 50%; background: #fff; box-shadow: 0 4px 10px rgba(50,50,93,.12); }
.round.big { width: 54px; height: 54px; }
.round svg { width: 10px; height: 15px; }
.big svg { width: 11px; height: 17px; }
.question { padding: 46px 0 0 25px; }
.light { font-weight: 400; letter-spacing: .55px; }
h3 { height: 52px; margin-top: 4px; font-size: 18px; line-height: 26px; font-weight: 600; letter-spacing: -.56px; color: #2f2b5c; white-space: nowrap; }
.loose { letter-spacing: -.4px; }
.answer { display: flex; align-items: center; height: 24px; font-size: 14px; letter-spacing: -.45px; padding-left: 4px; }
h3 + .answer { margin-top: 7px; }
.answer svg { width: 12px; height: 11px; margin-right: 6px; }
.chosen { color: #1f1b4c; -webkit-text-stroke: .2px; }
.chosen em { height: 19px; margin-left: 1px; padding: 0 11px 0 10px; background: #f2f5f9; border-radius: 3px; font: 11px/19px "Open Sans", sans-serif; letter-spacing: -.13px; color: #66758c; -webkit-text-stroke: 0; }
aside { padding: 17px 0 0 25px; background: #fafcfe; border-radius: 0 4px 4px 0; letter-spacing: -.47px; font-size: 13.500px; }
.side-label { height: 18px; font-size: 12px; line-height: 18px; letter-spacing: -.22px; }
.resource { display: flex; align-items: center; height: 22px; margin-top: 2px; padding-left: 2px; font-weight: 600; color: #2b2668; white-space: nowrap; }
.resource svg { width: 12px; height: 14px; margin-right: 6px; }
.stats { margin-top: 11px; }
ul { list-style: none; margin-top: 2px; }
li { position: relative; height: 22px; padding-left: 15px; line-height: 22px; white-space: nowrap; }
li::before { content: ""; position: absolute; left: 2px; top: 8px; width: 6px; height: 6px; border-radius: 50%; background: #55637a; }
b { font-weight: 600; }

.scrollbar { display: flex; flex-direction: column; align-items: center; width: 16px; background: #f0f0f0; }
.scrollbar svg { width: 8px; height: 6px; margin-top: 6px; }
.thumb { width: 16px; height: 174px; margin-top: 639px; background: #cdcdcd; }
.scrollbar .thumb + svg { margin-top: auto; margin-bottom: 5px; }

/* taskbar */
.taskbar { display: flex; align-items: center; height: 40px; flex: none; border-top: 1px solid #5b7b7c; background: linear-gradient(90deg, #7d9f9f 0, #83a3a4 40%, #79999a 75%, #638486 88%, #5f8082 100%); }
.start { width: 49px; padding-left: 11px; }
.start svg { width: 28px; height: 26px; }
.app { display: flex; align-items: center; justify-content: center; width: 59.500px; height: 39px; margin-left: 2.450px; flex: none; border: 1px solid transparent; }
.app svg { width: 31px; height: 31px; }
.open { background: rgba(255,255,255,.14); border-color: #adc3c3; box-shadow: inset 0 0 0 1px rgba(60,90,90,.15); }
.focused { background: #b3c4c4; border-color: #e9f0f0; box-shadow: inset 0 0 0 1px #d5dfdf; }
.stacked { position: relative; width: 51.500px; margin-right: 8px; }
.stacked::after { content: ""; position: absolute; right: -8px; top: -1px; width: 7px; height: 39px; border: 1px solid #a4bcbc; border-left-width: 0; background: linear-gradient(90deg, #8eacac 2px, #6f9092 3px, #9ab3b3 4px); }
.vs-out svg { filter: drop-shadow(0 0 1px #fff) drop-shadow(0 0 .5px #fff) drop-shadow(0 0 .5px #fff); }
.tray { display: flex; gap: 8px; margin-left: auto; }
.tray svg { width: 16px; height: 16px; }
.clock { display: flex; flex-direction: column; align-items: center; width: 96px; color: #fff; font-size: 12px; line-height: 17px; letter-spacing: -.5px; }
```
